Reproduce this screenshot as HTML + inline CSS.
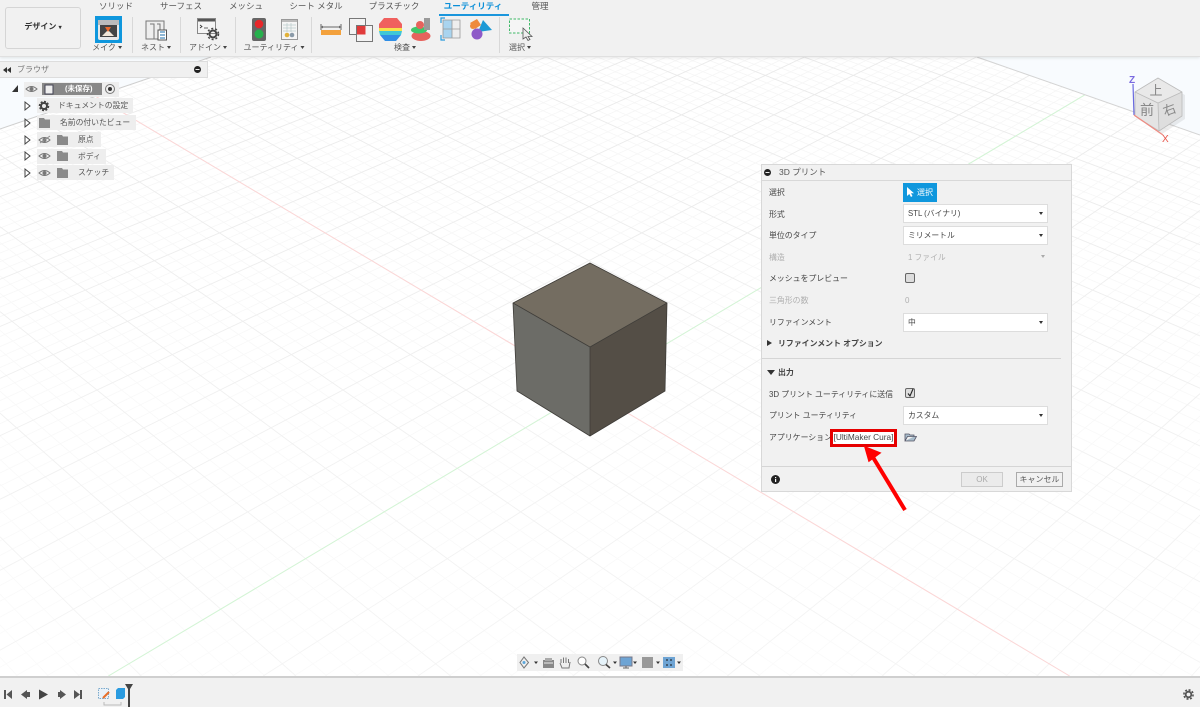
<!DOCTYPE html>
<html lang="ja"><head><meta charset="utf-8"><title>3D プリント</title>
<style>
html,body{margin:0;padding:0;width:1200px;height:707px;overflow:hidden;background:#fff}
body{position:relative;font-family:"Liberation Sans","Noto Sans CJK JP",sans-serif;color:#444;font-size:8px}
.a{position:absolute;white-space:nowrap}
svg{position:absolute;overflow:hidden}
.tab{top:0;font-size:8.5px;color:#555;line-height:12px;transform:translateX(-50%)}
.lbl{top:42px;font-size:8px;color:#555;line-height:12px;transform:translateX(-50%)}
.lbl:after{content:"";display:inline-block;border:2px solid transparent;border-top:3px solid #444;border-bottom:0;margin-left:2px;vertical-align:1.5px}
.sep{top:17px;width:1px;height:36px;background:#d8d8d8}
.tree{background:#eee;height:15px;line-height:15px;font-size:7.8px;color:#555}
.r{left:769px;font-size:7.9px;line-height:12px;color:#444}
.dis{color:#b0b0b0}
.sel{left:903px;width:145px;height:19px;background:#fff;border:1px solid #ddd;box-sizing:border-box;font-size:7.8px;line-height:17px;padding-left:4px;color:#444}
.sel:after{content:"";position:absolute;right:4px;top:7px;border:2.5px solid transparent;border-top:3px solid #333;border-bottom:0}
.cb{left:905px;width:10px;height:10px;border:1px solid #666;border-radius:2px;background:#ddd;box-sizing:border-box}
</style></head><body>

<!-- viewport grid -->
<svg style="left:0;top:0" width="1200" height="707" viewBox="0 0 1200 707">
<defs>
<clipPath id="g"><path d="M0 129L211 57H977L1200 135V707H0Z"/></clipPath>
<linearGradient id="fade" x1="0" y1="0" x2="0" y2="1"><stop offset="0" stop-color="#fff" stop-opacity="0"/><stop offset="1" stop-color="#fff" stop-opacity=".55"/></linearGradient>
</defs>
<path d="M0 57H211L0 129ZM977 57H1200V135Z" fill="#f8fbfe"/>
<g clip-path="url(#g)">
<path id="mn" fill="none" stroke="#f5f5f5" stroke-width=".8"/>
<path id="mj" fill="none" stroke="#e9e9e9" stroke-width=".9"/>
<rect width="1200" height="707" fill="url(#fade)"/>
<path id="rx" fill="none" stroke="#fcd6d6" stroke-width="1"/>
<path id="gx" fill="none" stroke="#d3f5d5" stroke-width="1"/>
</g>
<path d="M0 129L211 57" stroke="#cfcfcf" stroke-width="1"/>
<path d="M977 57L1200 135" stroke="#d4d4d4" stroke-width="1"/>
<!-- cube -->
<path d="M590 263L667 303L590 347L513 303Z" fill="#746d61"/>
<path d="M513 303L590 347V436L517 391Z" fill="#6c6c67"/>
<path d="M590 347L667 303L665 391L590 436Z" fill="#544e46"/>
<path d="M590 263L667 303L665 391L590 436L517 391L513 303ZM513 303L590 347L667 303M590 347V436" fill="none" stroke="#3f3d39" stroke-width=".8"/>
</svg>

<!-- toolbar -->
<div class="a" style="left:0;top:0;width:1200px;height:56px;background:#f1f1f1;border-bottom:1px solid #e0e0e0;box-shadow:0 1px 3px rgba(0,0,0,.1)"></div>
<div class="a" style="left:5px;top:7px;width:76px;height:42px;box-sizing:border-box;border:1px solid #d5d5d5;border-radius:3px;text-align:center;line-height:38px;font-size:8px;font-weight:bold;color:#333">デザイン <span style="font-size:6px;vertical-align:0">▾</span></div>
<div class="a tab" style="left:116px">ソリッド</div>
<div class="a tab" style="left:181px">サーフェス</div>
<div class="a tab" style="left:246px">メッシュ</div>
<div class="a tab" style="left:316px">シート メタル</div>
<div class="a tab" style="left:394px">プラスチック</div>
<div class="a tab" style="left:473px;color:#0b8fd8;font-weight:bold">ユーティリティ</div>
<div class="a tab" style="left:540px">管理</div>
<div class="a" style="left:439px;top:14px;width:70px;height:2px;background:#1b96dc"></div>

<!-- make icon -->
<svg style="left:95px;top:16px" width="27" height="27" viewBox="0 0 27 27"><rect width="27" height="27" fill="#0f97dd"/><rect x="3" y="4" width="21" height="20" rx="2" fill="#e8e8e8"/><rect x="3" y="4" width="21" height="5" fill="#bbb"/><rect x="5" y="9" width="17" height="12" fill="#444"/><path d="M7 20L13 14L19 20Z" fill="#f0e6d8"/><path d="M10 11H16L13 16Z" fill="#ec6a2c"/></svg>
<div class="a lbl" style="left:107px">メイク</div>
<div class="a sep" style="left:132px"></div>
<svg style="left:145px;top:19px" width="22" height="22" viewBox="0 0 22 22"><path d="M1 2H19V20H1ZM5 5H9V20M12 5H15V12" fill="#eee" stroke="#777"/><rect x="13" y="11" width="8.500" height="10" fill="#fff" stroke="#555"/><path d="M15 13H20M15 16H20M15 19H20" stroke="#1b6ea8"/></svg>
<div class="a lbl" style="left:156px">ネスト</div>
<div class="a sep" style="left:180px"></div>
<svg style="left:197px;top:18px" width="24" height="24" viewBox="0 0 24 24"><rect x=".5" y=".5" width="18" height="15" fill="#f4f4f4" stroke="#888"/><rect x="1" y="1" width="17" height="2.5" fill="#555"/><path d="M3 7L5 8.5L3 10M7 10H11" fill="none" stroke="#333" stroke-width=".8"/><circle cx="16" cy="16" r="3.5" fill="none" stroke="#444" stroke-width="2"/><circle cx="16" cy="16" r="5.5" fill="none" stroke="#444" stroke-width="1.5" stroke-dasharray="2 2"/></svg>
<div class="a lbl" style="left:208px">アドイン</div>
<div class="a sep" style="left:235px"></div>
<svg style="left:252px;top:18px" width="14" height="23" viewBox="0 0 14 23"><rect width="14" height="23" rx="2" fill="#666"/><circle cx="7" cy="6" r="4.3" fill="#e8262a"/><circle cx="7" cy="16" r="4.5" fill="#27b04d"/></svg>
<svg style="left:281px;top:19px" width="17" height="21" viewBox="0 0 17 21"><rect x=".5" y=".5" width="16" height="20" fill="#f5f5f5" stroke="#999"/><rect x="1" y="1" width="15" height="2" fill="#bbb"/><path d="M2 6H15M2 9H15M2 12H15M6 4V13M10 4V13" stroke="#bcc" stroke-width=".7"/><circle cx="6" cy="16" r="2.3" fill="#e2b23a"/><circle cx="11" cy="16" r="2.3" fill="#8a9aa8"/></svg>
<div class="a lbl" style="left:274px">ユーティリティ</div>
<div class="a sep" style="left:311px"></div>
<!-- inspect -->
<svg style="left:320px;top:17px" width="178" height="26" viewBox="0 0 178 26">
<rect x="1" y="13" width="20" height="5" fill="#f3a13c"/><path d="M1 7V13M21 7V13M1 10H21" stroke="#666" fill="none"/><path d="M3 8.500L1 10L3 11.500ZM19 8.500L21 10L19 11.500Z" fill="#666"/>
<rect x="29.500" y="1.500" width="16" height="16" fill="#f3f3f3" stroke="#777"/><rect x="36.500" y="8.500" width="16" height="16" fill="#f3f3f3" stroke="#777"/><rect x="37" y="9" width="8.500" height="8.500" fill="#e13b3b"/>
<path d="M64 1H77L82 7V13H59V7Z" fill="#f0605e"/><rect x="59" y="11" width="23" height="3" fill="#f7e14a"/><path d="M59 14H82L81 18H60Z" fill="#3fc7d6"/><path d="M60 18H81L76 24H65Z" fill="#2f8ee6"/>
<ellipse cx="101" cy="19" rx="9.500" ry="5" fill="#e7625c"/><ellipse cx="99" cy="13" rx="8" ry="3.500" fill="#3ec76a"/><circle cx="100" cy="8" r="4" fill="#e7625c"/><rect x="104" y="1" width="6" height="12" fill="#9a9a9a"/>
<rect x="123" y="3" width="9" height="18" fill="#a9d4ef"/><rect x="132" y="3" width="8" height="18" fill="#eee"/><path d="M123 3H140V21H123ZM123 12H140M132 3V21" fill="none" stroke="#999" stroke-width=".8"/><path d="M121 6V1H125M121 18V23H125" fill="none" stroke="#2a9bdc" stroke-width="1.200"/>
<path d="M150 6L157 2L161 8L155 12Z" fill="#ef8a3c"/><path d="M163 3L172 13L158 15Z" fill="#1d9ad6"/><circle cx="157" cy="17" r="5.500" fill="#8e5ac8"/><circle cx="153" cy="9" r="3" fill="#ef8a3c"/>
</svg>
<div class="a lbl" style="left:405px">検査</div>
<div class="a sep" style="left:499px"></div>
<svg style="left:508px;top:17px" width="26" height="24" viewBox="0 0 26 24"><rect x="1.500" y="2" width="20" height="14" fill="#f5f5f5" stroke="#3fb968" stroke-dasharray="2.500 1.500"/><path d="M15 11V22L18 20L20 23.500L22 22.500L20 19.500H24Z" fill="#eee" stroke="#555" stroke-width=".8"/></svg>
<div class="a lbl" style="left:520px">選択</div>

<!-- browser -->
<div class="a" style="left:0;top:61px;width:208px;height:17px;background:#f0f0f0;border:1px solid #ddd;border-left:0;box-sizing:border-box;line-height:15px;font-size:8px;color:#777;padding-left:17px">ブラウザ</div>
<svg style="left:3px;top:67px" width="8" height="6" viewBox="0 0 8 6"><path d="M4 0V6L0 3ZM8 0V6L4 3Z" fill="#333"/></svg>
<svg style="left:194px;top:66px" width="7" height="7" viewBox="0 0 7 7"><circle cx="3.500" cy="3.500" r="3.500" fill="#222"/><rect x="1.500" y="3" width="4" height="1" fill="#eee"/></svg>

<div class="a tree" style="left:24px;top:82px;width:95px"></div>
<div class="a" style="left:42px;top:83px;width:60px;height:12px;background:#888;color:#fff;font-size:7.500px;font-weight:bold;line-height:12px;padding-left:23px;box-sizing:border-box">(未保存)</div>
<div class="a tree" style="left:37px;top:98px;width:96px;padding-left:21px;box-sizing:border-box">ドキュメントの設定</div>
<div class="a tree" style="left:37px;top:115px;width:99px;padding-left:23px;box-sizing:border-box">名前の付いたビュー</div>
<div class="a tree" style="left:37px;top:132px;width:64px;padding-left:41px;box-sizing:border-box">原点</div>
<div class="a tree" style="left:37px;top:149px;width:69px;padding-left:41px;box-sizing:border-box">ボディ</div>
<div class="a tree" style="left:37px;top:165px;width:77px;padding-left:41px;box-sizing:border-box">スケッチ</div>
<svg style="left:0;top:0" width="150" height="180" viewBox="0 0 150 180">
<defs><g id="ar"><path d="M0 0L5 4L0 8Z" fill="#fff" stroke="#444"/></g>
<g id="fo"><path d="M0 0H5L6 1.500H11V10H0Z" fill="#8a8a8a"/></g>
<g id="ey"><path d="M0 4Q5.500 -1 11 4Q5.500 9 0 4Z" fill="none" stroke="#777"/><circle cx="5.500" cy="4" r="2" fill="#777"/></g></defs>
<path d="M12 92L18 85V92Z" fill="#333"/>
<use href="#ey" x="26" y="85"/>
<path d="M45 85H53V94H45Z" fill="#eee" stroke="#445"/>
<circle cx="110" cy="89" r="4.500" fill="#eee" stroke="#777"/><circle cx="110" cy="89" r="2" fill="#333"/>
<use href="#ar" x="25" y="102"/><use href="#ar" x="25" y="119"/><use href="#ar" x="25" y="136"/><use href="#ar" x="25" y="152"/><use href="#ar" x="25" y="169"/>
<circle cx="44" cy="106" r="3" fill="none" stroke="#444" stroke-width="2"/><circle cx="44" cy="106" r="4.500" fill="none" stroke="#444" stroke-width="1.500" stroke-dasharray="2 1.500"/>
<use href="#fo" x="39" y="118"/><use href="#fo" x="57" y="135"/><use href="#fo" x="57" y="151"/><use href="#fo" x="57" y="168"/>
<use href="#ey" x="39" y="136"/><path d="M40 143L50 136" stroke="#888"/><use href="#ey" x="39" y="152"/><use href="#ey" x="39" y="169"/>
</svg>

<!-- view cube -->
<svg style="left:1125px;top:70px" width="75" height="80" viewBox="0 0 75 80">
<path d="M10 22L33 8L57 22L57 46L34 61L10 46Z" fill="#000" opacity=".07" transform="translate(3 3)"/>
<path d="M33 8L57 22L33 33L10 22Z" fill="#e9e9e9"/><path d="M10 22L33 33L34 61L10 46Z" fill="#e4e4e4"/><path d="M33 33L57 22L57 46L34 61Z" fill="#dedede"/>
<path d="M33 8L57 22L57 46L34 61L10 46L10 22ZM10 22L33 33L57 22M33 33L34 61" fill="none" stroke="#bbb" stroke-width=".8"/>
<path d="M8 14L9 45" stroke="#6a6ae0" stroke-width="1.200"/><path d="M9 45L38 65" stroke="#f08a80" stroke-width="1.200"/>
<text x="4" y="13" font-size="10" font-weight="bold" fill="#7a6ae0">Z</text><text x="37" y="72" font-size="10" fill="#e8554a">X</text>
<text x="31" y="25" font-size="13" fill="#888" text-anchor="middle">上</text>
<text x="22" y="45" font-size="14" fill="#888" text-anchor="middle">前</text>
<text x="46" y="44" font-size="13" fill="#888" text-anchor="middle" transform="rotate(-20 46 44)">右</text>
</svg>

<!-- 3D print panel -->
<div class="a" style="left:761px;top:164px;width:311px;height:328px;background:#f1f1f1;border:1px solid #d8d8d8;box-sizing:border-box"></div>
<div class="a" style="left:761px;top:164px;width:311px;height:17px;border:1px solid #d8d8d8;box-sizing:border-box;line-height:15px;font-size:8.500px;color:#555;padding-left:17px">3D プリント</div>
<svg style="left:764px;top:169px" width="7" height="7" viewBox="0 0 7 7"><circle cx="3.500" cy="3.500" r="3.500" fill="#222"/><rect x="1.500" y="3" width="4" height="1" fill="#eee"/></svg>

<div class="a r" style="top:187px">選択</div>
<div class="a" style="left:903px;top:183px;width:34px;height:19px;background:#0f97dd;color:#fff;font-size:8px;line-height:19px;padding-left:14px;box-sizing:border-box">選択</div>
<svg style="left:907px;top:187px" width="7" height="10" viewBox="0 0 7 10"><path d="M0 0V9L2.300 7L4 10L5.500 9L4 6.300H7Z" fill="#fff"/></svg>
<div class="a r" style="top:209px">形式</div>
<div class="a sel" style="top:204px">STL (バイナリ)</div>
<div class="a r" style="top:230px">単位のタイプ</div>
<div class="a sel" style="top:226px">ミリメートル</div>
<div class="a r dis" style="top:252px">構造</div>
<div class="a dis" style="left:908px;top:252px;font-size:7.800px;line-height:12px">1 ファイル</div>
<div class="a" style="left:1041px;top:255px;border:2.500px solid transparent;border-top:3px solid #aaa;border-bottom:0"></div>
<div class="a r" style="top:273px">メッシュをプレビュー</div>
<div class="a cb" style="top:273px"></div>
<div class="a r dis" style="top:295px">三角形の数</div>
<div class="a dis" style="left:905px;top:295px;font-size:8px;line-height:12px">0</div>
<div class="a r" style="top:317px">リファインメント</div>
<div class="a sel" style="top:313px">中</div>

<div class="a" style="left:767px;top:340px;border:3px solid transparent;border-left:5px solid #333;border-right:0"></div>
<div class="a" style="left:778px;top:338px;font-size:7.900px;font-weight:bold;line-height:12px;color:#444">リファインメント オプション</div>
<div class="a" style="left:762px;top:358px;width:299px;height:1px;background:#d5d5d5"></div>
<div class="a" style="left:767px;top:370px;border:4px solid transparent;border-top:5px solid #333;border-bottom:0"></div>
<div class="a" style="left:778px;top:367px;font-size:7.900px;font-weight:bold;line-height:12px;color:#444">出力</div>
<div class="a r" style="top:389px">3D プリント ユーティリティに送信</div>
<div class="a cb" style="top:388px"></div>
<svg style="left:906px;top:388px" width="9" height="10" viewBox="0 0 9 10"><path d="M2 5.500L4 8L7 1" fill="none" stroke="#222" stroke-width="1.100"/></svg>
<div class="a r" style="top:410px">プリント ユーティリティ</div>
<div class="a sel" style="top:406px">カスタム</div>
<div class="a r" style="top:432px">アプリケーション</div>
<div class="a" style="left:830px;top:429px;width:67px;height:18px;border:3px solid #e60000;box-sizing:border-box;background:#fff"></div>
<div class="a" style="left:832px;top:432px;width:63px;font-size:8.300px;line-height:11px;color:#444;text-align:center;overflow:hidden">[UltiMaker Cura]</div>
<svg style="left:904px;top:433px" width="13" height="9" viewBox="0 0 13 9"><path d="M1 8V1H5L6 2H10V3.500H3.500L1 8H10L12.500 3.500H10" fill="#a8bccb" stroke="#556" stroke-width=".8"/></svg>

<div class="a" style="left:762px;top:466px;width:309px;height:1px;background:#d5d5d5"></div>
<svg style="left:771px;top:475px" width="9" height="9" viewBox="0 0 9 9"><circle cx="4.500" cy="4.500" r="4.500" fill="#222"/><rect x="4" y="4" width="1.200" height="3" fill="#fff"/><rect x="4" y="2" width="1.200" height="1.200" fill="#fff"/></svg>
<div class="a" style="left:961px;top:472px;width:42px;height:15px;background:#ebebeb;border:1px solid #ccc;box-sizing:border-box;text-align:center;line-height:13px;font-size:8px;color:#aaa">OK</div>
<div class="a" style="left:1016px;top:472px;width:47px;height:15px;border:1px solid #aaa;box-sizing:border-box;text-align:center;line-height:13px;font-size:8px;color:#555;background:#f1f1f1">キャンセル</div>

<!-- arrow -->
<svg style="left:0;top:0" width="1200" height="707" viewBox="0 0 1200 707"><path d="M905 510L871 454" stroke="#f00" stroke-width="4"/><path d="M865 447L880 453L869 461Z" fill="#f00" stroke="#f00" stroke-width="1.500"/></svg>

<!-- nav bar -->
<div class="a" style="left:517px;top:654px;width:166px;height:17px;background:#f0f0f0"></div>
<svg style="left:517px;top:654px" width="166" height="17" viewBox="0 0 166 17">
<path d="M7 3L11.500 8.500L7 14L3 8.500Z" fill="#eee" stroke="#777"/><circle cx="7" cy="8.500" r="1.500" fill="#5aa7dc"/><path d="M17 7.500H21L19 10Z" fill="#333"/>
<rect x="26" y="6" width="11" height="8" fill="#888"/><rect x="28" y="4" width="7" height="3" fill="#aaa"/><path d="M27 9H36" stroke="#eee"/>
<path d="M44 9V5M46.500 9V3.500M49 9V3.500M51.500 9V5M53 9V8L52 14H45L43 9" fill="#eee" stroke="#777" stroke-width="1"/>
<circle cx="65" cy="7" r="4" fill="#fff" stroke="#888"/><path d="M68 10L72 14" stroke="#444" stroke-width="1.700"/>
<circle cx="86" cy="7" r="4.500" fill="#e6f3fa" stroke="#888"/><path d="M89 10.500L93 14" stroke="#444" stroke-width="1.700"/><path d="M96 7.500H100L98 10Z" fill="#333"/>
<rect x="103" y="3" width="12" height="9" fill="#6ea4d4" stroke="#778"/><path d="M106 14H112M109 12V14" stroke="#666"/><path d="M116 7.500H120L118 10Z" fill="#333"/>
<rect x="125" y="3" width="11" height="11" fill="#999"/><path d="M139 7.500H143L141 10Z" fill="#333"/>
<rect x="146" y="3" width="12" height="11" fill="#6ea4d4"/><path d="M149 6H151M153 6H155M149 11H151M153 11H155" stroke="#345" stroke-width="1.400"/><path d="M160 7.500H164L162 10Z" fill="#333"/>
</svg>

<!-- timeline -->
<div class="a" style="left:0;top:676px;width:1200px;height:31px;background:#f1f1f1;border-top:2px solid #cfcfcf;box-sizing:border-box"></div>
<svg style="left:0;top:682px" width="140" height="25" viewBox="0 0 140 25">
<path d="M4 8H6V17H4ZM12 8V17L6.500 12.500Z" fill="#555"/>
<path d="M27 8V17L21 12.500ZM27 10H30V15H27Z" fill="#555"/>
<path d="M39 7.500L48 12.500L39 17.500Z" fill="#444"/>
<path d="M58 10H60V15H58ZM60 8L66 12.500L60 17Z" fill="#555"/>
<path d="M74 8L80 12.500L74 17ZM80 8H82V17H80Z" fill="#555"/>
<rect x="98.500" y="6.500" width="10" height="10" fill="#e9f1f8" stroke="#7aa9cc" stroke-dasharray="1.500 1"/><path d="M103 16L109 10" stroke="#e8702a" stroke-width="2"/>
<path d="M116 8L118 6H125V15L123 17H116Z" fill="#2a9be0"/>
<path d="M104 20V23H121V20" fill="none" stroke="#bbb"/>
<path d="M125 2H133L130 7V25H128V7Z" fill="#444"/>
</svg>
<svg style="left:1183px;top:689px" width="11" height="11" viewBox="0 0 11 11"><circle cx="5.500" cy="5.500" r="2.800" fill="none" stroke="#555" stroke-width="1.800"/><circle cx="5.500" cy="5.500" r="4.600" fill="none" stroke="#555" stroke-width="1.600" stroke-dasharray="2 1.600"/></svg>

<script>
(function(){
var a=61.5,b=36.6,p=.033,O=[589,390],W=1200,H=676;
function P(u,v){var w=1-p*u-p*v;return [O[0]+a*(u-v)/w,O[1]+b*(u+v)/w]}
function L(u0,v0,u1,v1){
  var A=P(u0,v0),B=P(u1,v1),dx=B[0]-A[0],dy=B[1]-A[1],t0=0,t1=1;
  var q=[[-dx,A[0]],[dx,W-A[0]],[-dy,A[1]],[dy,H-A[1]]];
  for(var i=0;i<4;i++){
    var pp=q[i][0],qq=q[i][1];
    if(pp===0){if(qq<0)return '';continue}
    var r=qq/pp;
    if(pp<0){if(r>t1)return '';if(r>t0)t0=r}else{if(r<t0)return '';if(r<t1)t1=r}
  }
  return 'M'+(A[0]+t0*dx).toFixed(1)+' '+(A[1]+t0*dy).toFixed(1)+'L'+(A[0]+t1*dx).toFixed(1)+' '+(A[1]+t1*dy).toFixed(1);
}
var mn='',mj='',i,t,e,MIN=-11,MAX=26;
for(i=0;i<=(MAX-MIN)*5;i++){
  t=MIN+i/5;
  e=Math.min(MAX,26-t);
  if(e<=MIN)continue;
  var s=L(t,MIN,t,e)+L(MIN,t,e,t);
  if(i%5===0)mj+=s;else mn+=s;
}
document.getElementById('mn').setAttribute('d',mn);
document.getElementById('mj').setAttribute('d',mj);
document.getElementById('rx').setAttribute('d',L(MIN,0,26,0));
document.getElementById('gx').setAttribute('d',L(0,MIN,0,26));
})();
</script>
</body></html>
